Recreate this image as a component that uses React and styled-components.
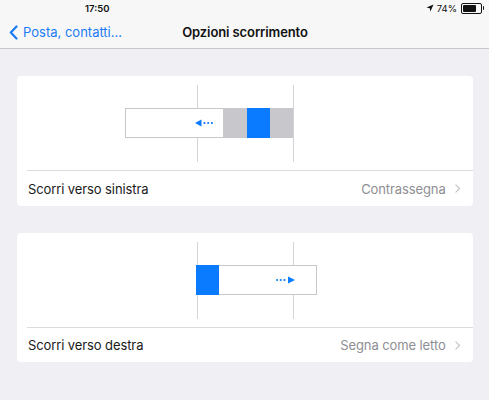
import React from 'react'
import styled, { createGlobalStyle } from 'styled-components'

const Global = createGlobalStyle`
  html, body {
    margin: 0;
    padding: 0;
    background: #efeff4;
  }
  body {
    font-family: Inter, "Liberation Sans", sans-serif;
    -webkit-font-smoothing: antialiased;
  }
`

const Page = styled.div`
  width: 489px;
  height: 400px;
  background: #efeff4;
  overflow: hidden;
`

const StatusBar = styled.div`
  height: 16px;
  background: #f7f7f8;
  display: flex;
  align-items: center;
  justify-content: space-between;
  padding: 0 7px 0 85px;
  font-size: 9.5px;
  font-weight: 600;
  color: #111;
`

const StatusRight = styled.div`
  display: flex;
  align-items: center;
  gap: 3px;
  font-weight: 400;
  font-size: 9.5px;
`

const Battery = styled.div`
  position: relative;
  width: 17px;
  height: 7px;
  border: 1px solid #111;
  border-radius: 2px;
  margin-left: 1px;
  padding: 1px;
  box-sizing: content-box;

  &::before {
    content: '';
    display: block;
    width: 74%;
    height: 100%;
    background: #111;
    border-radius: 1px;
  }

  &::after {
    content: '';
    position: absolute;
    right: -3px;
    top: 2.5px;
    width: 1.5px;
    height: 4px;
    background: #111;
    border-radius: 0 1px 1px 0;
  }
`

const NavBar = styled.div`
  height: 32px;
  background: #f7f7f8;
  border-bottom: 1px solid #c9c9cd;
  display: grid;
  grid-template-columns: 1fr auto 1fr;
  align-items: center;
  padding: 0 8px 0 9px;
`

const Back = styled.div`
  display: flex;
  align-items: center;
  gap: 5px;
  color: #1a7cf5;
  font-size: 13px;
`

const Title = styled.div`
  font-size: 13px;
  font-weight: 600;
  color: #111;
  letter-spacing: -0.1px;
`

const Content = styled.div`
  display: flex;
  flex-direction: column;
  gap: 27px;
  padding: 27px 16px 0 17px;
`

const Card = styled.div`
  background: #fff;
  border-radius: 4px;
  overflow: hidden;
`

const Illustration = styled.div`
  height: 95px;
  display: flex;
  justify-content: center;
  margin-left: 10px;
  padding-right: 10px;
  border-bottom: 1px solid #dcdce0;
  box-sizing: border-box;
`

const Row = styled.div`
  height: ${({ h }) => h}px;
  display: flex;
  align-items: center;
  justify-content: space-between;
  padding: 0 13px 0 11px;
  font-size: 13px;
`

const Label = styled.span`
  color: #1a1a1a;
  letter-spacing: -0.1px;
`

const Value = styled.span`
  display: flex;
  align-items: center;
  gap: 9px;
  color: #8e8e93;
  letter-spacing: -0.1px;
`

const Chevron = ({ color = '#c4c4c9', size = 9, w = 1.3 }) => (
  <svg width={size * 0.6} height={size} viewBox="0 0 6 10">
    <path d="M1 1 L5 5 L1 9" fill="none" stroke={color} strokeWidth={w} strokeLinecap="round" strokeLinejoin="round" />
  </svg>
)

const BackChevron = () => (
  <svg width="9" height="15" viewBox="0 0 9 15">
    <path d="M7.5 1.5 L1.8 7.5 L7.5 13.5" fill="none" stroke="#1a7cf5" strokeWidth="2.2" strokeLinecap="round" strokeLinejoin="round" />
  </svg>
)

const BLUE = '#0a7bff'
const GRAY = '#c7c7cc'
const LINE = '#d4d4d8'

// drawing spans card x 108..348 (page 125..365)
const SwipeLeft = () => (
  <svg width="240" height="95" viewBox="0 0 240 95">
    <line x1="72.5" y1="9" x2="72.5" y2="86" stroke={LINE} strokeWidth="1" />
    <rect x="0.5" y="32.5" width="98" height="29" fill="#fff" stroke={GRAY} strokeWidth="1" />
    <rect x="98" y="32" width="70" height="30" fill={GRAY} />
    <rect x="122" y="32" width="23" height="30" fill={BLUE} />
    <line x1="168.5" y1="9" x2="168.5" y2="86" stroke={LINE} strokeWidth="1" />
    <path d="M70 47 L76.5 43.5 L76.5 50.5 Z" fill={BLUE} />
    <circle cx="79.5" cy="47" r="1.1" fill={BLUE} />
    <circle cx="83.2" cy="47" r="1.1" fill={BLUE} />
    <circle cx="86.9" cy="47" r="1.1" fill={BLUE} />
  </svg>
)

const SwipeRight = () => (
  <svg width="240" height="95" viewBox="0 0 240 95">
    <line x1="72.5" y1="9" x2="72.5" y2="86" stroke={LINE} strokeWidth="1" />
    <line x1="168.5" y1="9" x2="168.5" y2="86" stroke={LINE} strokeWidth="1" />
    <rect x="71.5" y="32.5" width="120" height="29" fill="#fff" stroke={GRAY} strokeWidth="1" />
    <rect x="71" y="32" width="23" height="30" fill={BLUE} />
    <circle cx="152" cy="47" r="1.1" fill={BLUE} />
    <circle cx="155.7" cy="47" r="1.1" fill={BLUE} />
    <circle cx="159.4" cy="47" r="1.1" fill={BLUE} />
    <path d="M170 47 L163 43.5 L163 50.5 Z" fill={BLUE} />
  </svg>
)

const options = [
  { label: 'Scorri verso sinistra', value: 'Contrassegna', Drawing: SwipeLeft, h: 35 },
  { label: 'Scorri verso destra', value: 'Segna come letto', Drawing: SwipeRight, h: 34 },
]

export default function App() {
  return (
    <Page>
      <Global />
      <StatusBar>
        <span>17:50</span>
        <StatusRight>
          <svg width="8" height="8" viewBox="0 0 8 8">
            <path d="M7.5 0.5 L0.5 3.6 L3.8 4.2 L4.4 7.5 Z" fill="#111" />
          </svg>
          <span>74%</span>
          <Battery />
        </StatusRight>
      </StatusBar>
      <NavBar>
        <Back>
          <BackChevron />
          <span>Posta, contatti...</span>
        </Back>
        <Title>Opzioni scorrimento</Title>
        <div />
      </NavBar>
      <Content>
        {options.map(({ label, value, Drawing, h }) => (
          <Card key={label}>
            <Illustration>
              <Drawing />
            </Illustration>
            <Row h={h}>
              <Label>{label}</Label>
              <Value>
                {value}
                <Chevron />
              </Value>
            </Row>
          </Card>
        ))}
      </Content>
    </Page>
  )
}
